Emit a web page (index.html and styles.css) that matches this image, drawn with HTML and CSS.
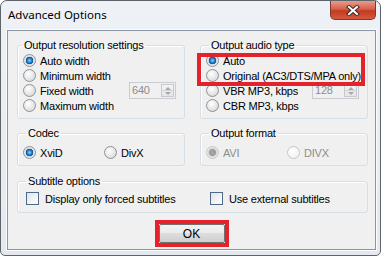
FILE: index.html
```html
<!DOCTYPE html>
<html lang="en">
<head>
  <meta charset="UTF-8">
  <title>Advanced Options</title>
  <link rel="stylesheet" href="styles.css">
</head>
<body>
  <div class="window">
    <div class="titlebar">
      <span class="title">Advanced Options</span>
      <button class="close" aria-label="Close">
        <svg width="14" height="11" viewBox="0 0 14 11">
          <path d="M3 2 L11 9 M11 2 L3 9" stroke="#3b2a26" stroke-width="4" stroke-linecap="square"/>
          <path d="M3 2 L11 9 M11 2 L3 9" stroke="#fff" stroke-width="2" stroke-linecap="square"/>
        </svg>
      </button>
    </div>

    <div class="client">
      <div class="row">
        <fieldset class="group tall">
          <legend class="legend-first">Output resolution settings</legend>
          <div class="opt"><span class="radio checked"></span>Auto width</div>
          <div class="opt"><span class="radio"></span>Minimum width</div>
          <div class="opt">
            <span class="label-col"><span class="radio"></span>Fixed width</span>
            <span class="spin">640<span class="spin-btns"><i class="up"></i><i class="down"></i></span></span>
          </div>
          <div class="opt"><span class="radio"></span>Maximum width</div>
        </fieldset>

        <fieldset class="group tall">
          <legend>Output audio type</legend>
          <div class="mark mark-audio"></div>
          <div class="opt"><span class="radio checked"></span>Auto</div>
          <div class="opt"><span class="radio"></span>Original (AC3/DTS/MPA only)</div>
          <div class="opt">
            <span class="label-col"><span class="radio"></span>VBR MP3, kbps</span>
            <span class="spin">128<span class="spin-btns"><i class="up"></i><i class="down"></i></span></span>
          </div>
          <div class="opt"><span class="radio"></span>CBR MP3, kbps</div>
        </fieldset>
      </div>

      <div class="row">
        <fieldset class="group short">
          <legend>Codec</legend>
          <div class="cols">
            <div class="opt"><span class="radio checked"></span>XviD</div>
            <div class="opt"><span class="radio"></span>DivX</div>
          </div>
        </fieldset>

        <fieldset class="group short">
          <legend>Output format</legend>
          <div class="cols disabled">
            <div class="opt"><span class="radio checked"></span>AVI</div>
            <div class="opt"><span class="radio"></span>DIVX</div>
          </div>
        </fieldset>
      </div>

      <fieldset class="group wide">
        <legend>Subtitle options</legend>
        <div class="checks">
          <div class="opt"><span class="check"></span>Display only forced subtitles</div>
          <div class="opt"><span class="check"></span>Use external subtitles</div>
        </div>
      </fieldset>

      <div class="actions">
        <div class="mark-ok"><button class="ok">OK</button></div>
      </div>
    </div>
  </div>
</body>
</html>
```

FILE: styles.css
```css
body { margin: 0; background: #fff; font-family: "Liberation Sans", Arial, sans-serif; font-size: 11px; letter-spacing: -0.2px; color: #000; }
.window { box-sizing: border-box; width: 381px; height: 256px; border: 1px solid #5f646b; border-radius: 7px 7px 5px 5px; background: linear-gradient(#eef2f6, #e4e9ef); padding: 0 4px 6px 6px; }
.titlebar { display: flex; justify-content: space-between; align-items: flex-start; height: 29px; }
.title { font-family: "Noto Sans", sans-serif; font-size: 11.5px; letter-spacing: 0; margin: 6px 0 0 1px; }
.close { width: 46px; height: 19px; margin-top: 0; padding: 0; border: 1px solid #7b3a30; border-top: none; border-radius: 0 0 5px 5px; background: linear-gradient(#e99c8c, #d6604a 45%, #c23a22 55%, #d25a3e); display: flex; align-items: center; justify-content: center; }

.client { box-sizing: border-box; height: 220px; border: 1px solid #8b96a2; box-shadow: 0 0 0 1px #fbfcfd; background: #f0f0f0; padding: 8px 7px 0 9px; }
.row { display: flex; gap: 15px; margin-bottom: 8px; }
.group { position: relative; box-sizing: border-box; margin: 0; padding: 0 0 0 5px; border: 1px solid #d5dfe5; border-radius: 3px; box-shadow: inset 1px 1px 0 #fff; min-width: 0; }
.group legend { margin-left: 3px; padding: 0 2px; line-height: 13px; }
.group .legend-first { margin-left: -1px; }
.tall { width: 168px; height: 80px; padding-top: 1px; }
.short { width: 168px; height: 39px; padding-top: 5px; }
.wide { width: 351px; height: 38px; padding-top: 3px; margin-top: 9px; }

.opt { display: flex; align-items: center; height: 15px; white-space: nowrap; }
.label-col { display: flex; align-items: center; width: 106px; }
.radio { box-sizing: border-box; width: 13px; height: 13px; margin-right: 4px; border-radius: 50%; border: 1px solid #8e9297; background: radial-gradient(circle at 40% 35%, #fff, #e2e3e4 60%, #cfd1d3); flex: none; }
.radio.checked { background: radial-gradient(circle, #8fd0f5 0, #2a8ad4 2px, #104f8f 3.5px, #cfd8e0 4px, #f4f4f4 6px); }
.check { box-sizing: border-box; width: 13px; height: 13px; margin-right: 6px; border: 1px solid #4f6a88; background: linear-gradient(135deg, #dfe3e8, #fff); flex: none; }

.cols { display: grid; grid-template-columns: 81px auto; }
.disabled { color: #8d8d8d; }
.disabled .radio { border-color: #c4c7ca; background: radial-gradient(circle at 40% 35%, #fff, #eeeeee); }
.disabled .radio.checked { background: radial-gradient(circle, #a9a9a9 0, #9a9a9a 3px, #d5d5d5 4px, #f4f4f4 6px); }
.checks { display: grid; grid-template-columns: 184px auto; padding-left: 3px; }

.spin { display: flex; align-items: center; justify-content: space-between; box-sizing: border-box; width: 47px; height: 17px; border: 1px solid #c9cdd2; background: #f0f0f0; color: #8d8d8d; padding: 0 1px 0 2px; margin-top: -1px; }
.spin-btns { display: flex; flex-direction: column; width: 13px; height: 13px; border: 1px solid #c6cacf; box-sizing: border-box; background: linear-gradient(#f4f4f4, #e5e5e5); }
.spin-btns i { flex: 1; position: relative; }
.spin-btns .up { border-bottom: 1px solid #d3d6d9; }
.spin-btns .up::after, .spin-btns .down::after { content: ""; position: absolute; left: 3px; border: 3px solid transparent; }
.spin-btns .up::after { top: -1px; border-bottom-color: #a8a8a8; }
.spin-btns .down::after { top: 1px; border-top-color: #a8a8a8; }

.mark { position: absolute; border: 4px solid #e5212b; }
.mark-audio { left: -4px; top: 1px; width: 160px; height: 25px; }

.actions { display: flex; justify-content: center; margin-top: 7px; padding-right: 2px; }
.mark-ok { border: 4px solid #e5212b; }
.ok { display: block; width: 66px; height: 19px; padding: 0; border: 1px solid #707070; border-radius: 2px; background: linear-gradient(#f2f2f2, #ebebeb 45%, #dddddd 50%, #cfcfcf); font: 12px "Liberation Sans", Arial, sans-serif; color: #000; }
```
